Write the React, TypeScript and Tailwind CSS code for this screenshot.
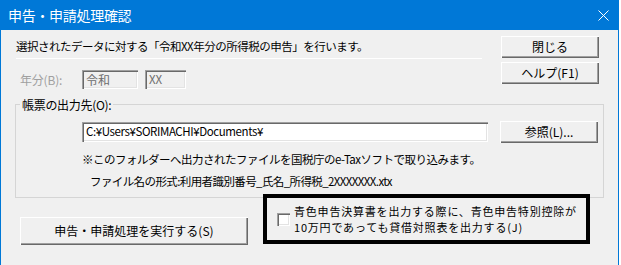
export default function App() {
  const btn =
    "bg-[#f0f0f0] shadow-[inset_1px_1px_0_#ffffff,inset_-1px_-1px_0_#696969,inset_-2px_-2px_0_#a0a0a0] text-[12px] leading-none flex items-center justify-center text-black";
  const sunken =
    "shadow-[inset_1px_1px_0_#a0a0a0,inset_2px_2px_0_#696969,inset_-1px_-1px_0_#ffffff,inset_-2px_-2px_0_#e3e3e3]";
  return (
    <div className="w-[621px] h-[265px] bg-white overflow-hidden font-['Noto_Sans_CJK_JP',sans-serif] text-black">
      <div className="w-[619px] h-[265px] bg-[#f0f0f0] border-x border-[#0078d7] flex flex-col">
        {/* title bar */}
        <div className="h-[30px] -mx-px bg-[#0078d7] flex items-center justify-between pl-[8px] pr-[10px] text-white shrink-0">
          <span className="text-[14px] leading-none tracking-[-0.3px]">申告・申請処理確認</span>
          <svg width="11" height="11" viewBox="0 0 11 11" className="mt-px">
            <path d="M0.5 0.5 L10.5 10.5 M10.5 0.5 L0.5 10.5" stroke="#ffffff" strokeWidth="1" fill="none" />
          </svg>
        </div>

        {/* top section */}
        <div className="flex pl-[15px] pr-[19px] shrink-0">
          <div className="flex-1 flex flex-col">
            <div className="mt-[6px] h-[20px] text-[11.5px] leading-[20px] tracking-[-0.5px] whitespace-nowrap">
              選択されたデータに対する「令和XX年分の所得税の申告」を行います。
            </div>
            <div className="mt-[2px] h-px w-[466px] bg-white" />
            <div className="mt-[11px] h-[19px] flex items-center">
              <span className="pl-[4px] w-[66px] text-[12px] leading-none text-[#a0a0a0] tracking-[-0.2px]">年分(B):</span>
              <div className={`w-[56px] h-[19px] ${sunken} flex items-center pl-[4px] text-[12px] leading-none text-[#6d6d6d]`}>令和</div>
              <div className={`ml-[7px] w-[41px] h-[19px] ${sunken} flex items-center pl-[4px] text-[11.5px] leading-none text-[#6d6d6d]`}>XX</div>
            </div>
          </div>
          <div className="w-[98px] mt-[6px] flex flex-col gap-[4px]">
            <div className={`${btn} h-[22px]`}>閉じる</div>
            <div className={`${btn} h-[22px]`}>ヘルプ(F1)</div>
          </div>
        </div>

        {/* group box */}
        <div className="mt-[15px] ml-[14px] w-[589px] h-[94px] border border-[#d5d5d5] flex flex-col shrink-0">
          <div className="-mt-[8px] ml-[4px] h-[16px] self-start px-[2px] bg-[#f0f0f0] text-[12px] leading-[16px] tracking-[-0.3px]">
            帳票の出力先(O):
          </div>
          <div className="mt-[8px] flex items-center">
            <div className={`ml-[66px] w-[406px] h-[20px] bg-white ${sunken} flex items-center pl-[4px] text-[11.5px] leading-none tracking-[-0.4px]`}>
              C:¥Users¥SORIMACHI¥Documents¥
            </div>
            <div className={`${btn} ml-[12px] w-[98px] h-[22px]`}>参照(L)...</div>
          </div>
          <div className="mt-[7px] pl-[66px] h-[18px] text-[11.5px] leading-[18px] tracking-[-0.5px] whitespace-nowrap">
            ※このフォルダーへ出力されたファイルを国税庁のe-Taxソフトで取り込みます。
          </div>
          <div className="mt-[4px] pl-[74px] h-[18px] text-[11.5px] leading-[18px] tracking-[-0.6px] whitespace-nowrap">
            ファイル名の形式:利用者識別番号_氏名_所得税_2XXXXXXX.xtx
          </div>
        </div>

        {/* bottom row */}
        <div className="flex items-start">
          <div className={`${btn} mt-[19px] ml-[19px] w-[228px] h-[28px]`}>申告・申請処理を実行する(S)</div>
          <div className="-mt-[4px] ml-[15px] w-[327px] h-[50px] border-[4px] border-black flex items-center pl-[10px]">
            <div className={`w-[13px] h-[13px] bg-white ${sunken} shrink-0`} />
            <div className="ml-[4px] text-[11px] leading-[16px] tracking-[0.8px] whitespace-nowrap">
              <div>青色申告決算書を出力する際に、青色申告特別控除が</div>
              <div>10万円であっても貸借対照表を出力する(J)</div>
            </div>
          </div>
        </div>
      </div>
    </div>
  );
}
